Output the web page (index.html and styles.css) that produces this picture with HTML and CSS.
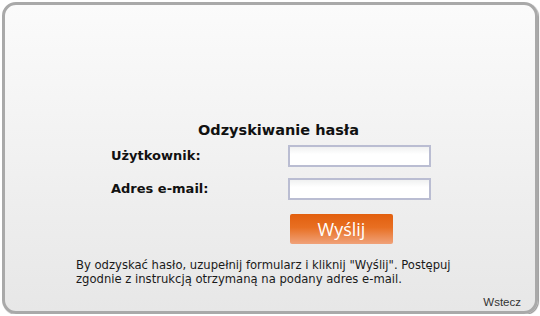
FILE: index.html
```html
<!DOCTYPE html>
<html lang="pl">
<head>
<meta charset="utf-8">
<title>Odzyskiwanie hasła</title>
<link rel="stylesheet" href="styles.css">
</head>
<body>
<div class="box">
  <h1 class="title">Odzyskiwanie hasła</h1>
  <form class="form">
    <label class="label" for="u">Użytkownik:</label>
    <input class="input" id="u" type="text">
    <label class="label" for="e">Adres e-mail:</label>
    <input class="input" id="e" type="text">
    <span class="spacer"></span>
    <button class="send" type="button">Wyślij</button>
  </form>
  <p class="info">By odzyskać hasło, uzupełnij formularz i kliknij "Wyślij". Postępuj zgodnie z instrukcją otrzymaną na podany adres e-mail.</p>
  <div class="back">Wstecz</div>
</div>
</body>
</html>
```
FILE: styles.css
```css
html, body {
  margin: 0;
  padding: 0;
  background: #ffffff;
}
.box {
  margin: 2px 0 0 2px;
  width: 536px;
  height: 312px;
  box-sizing: border-box;
  border: 3px solid #a9a9a9;
  border-radius: 14px;
  background: linear-gradient(#fbfbfb, #e7e7e7);
  box-shadow: 1px 1px 1px #999;
  display: flex;
  flex-direction: column;
  padding: 117px 14px 2px 0;
  font-family: "DejaVu Sans", Verdana, sans-serif;
  color: #111;
}
.title {
  margin: 0;
  padding-left: 31px;
  text-align: center;
  font-size: 14.5px;
  line-height: 17px;
  font-weight: bold;
}
.form {
  margin: 6px 0 0 106px;
  display: grid;
  grid-template-columns: 177px 143px;
  grid-template-rows: 22px 22px auto;
  row-gap: 11px;
  align-items: center;
}
.label {
  font-size: 13px;
  font-weight: bold;
  line-height: 22px;
}
.input {
  box-sizing: border-box;
  width: 143px;
  height: 22px;
  margin: 0;
  border: 2px solid #babdd2;
  background: linear-gradient(#f0f1f1, #ffffff 40%, #ffffff);
  padding: 0 3px;
}
.spacer {
  grid-row: 3;
  grid-column: 1;
}
.send {
  grid-row: 3;
  grid-column: 2;
  margin: 3px 0 0 2px;
  align-self: start;
  height: 30px;
  width: 103px;
  border: 0;
  border-radius: 2px;
  background: linear-gradient(#e25f0e, #e86f22 45%, #f0a27a);
  color: #fff;
  font-family: "Open Sans", "DejaVu Sans", sans-serif;
  font-size: 18px;
  padding: 0;
  line-height: 30px;
}
.info {
  margin: 14px 0 0 71px;
  font-size: 11.6px;
  line-height: 14px;
  color: #1a1a1a;
  width: 410px;
}
.back {
  margin-top: auto;
  text-align: right;
  font-family: "Liberation Sans", Arial, sans-serif;
  font-size: 11.5px;
  line-height: 13px;
  color: #333;
}
```
